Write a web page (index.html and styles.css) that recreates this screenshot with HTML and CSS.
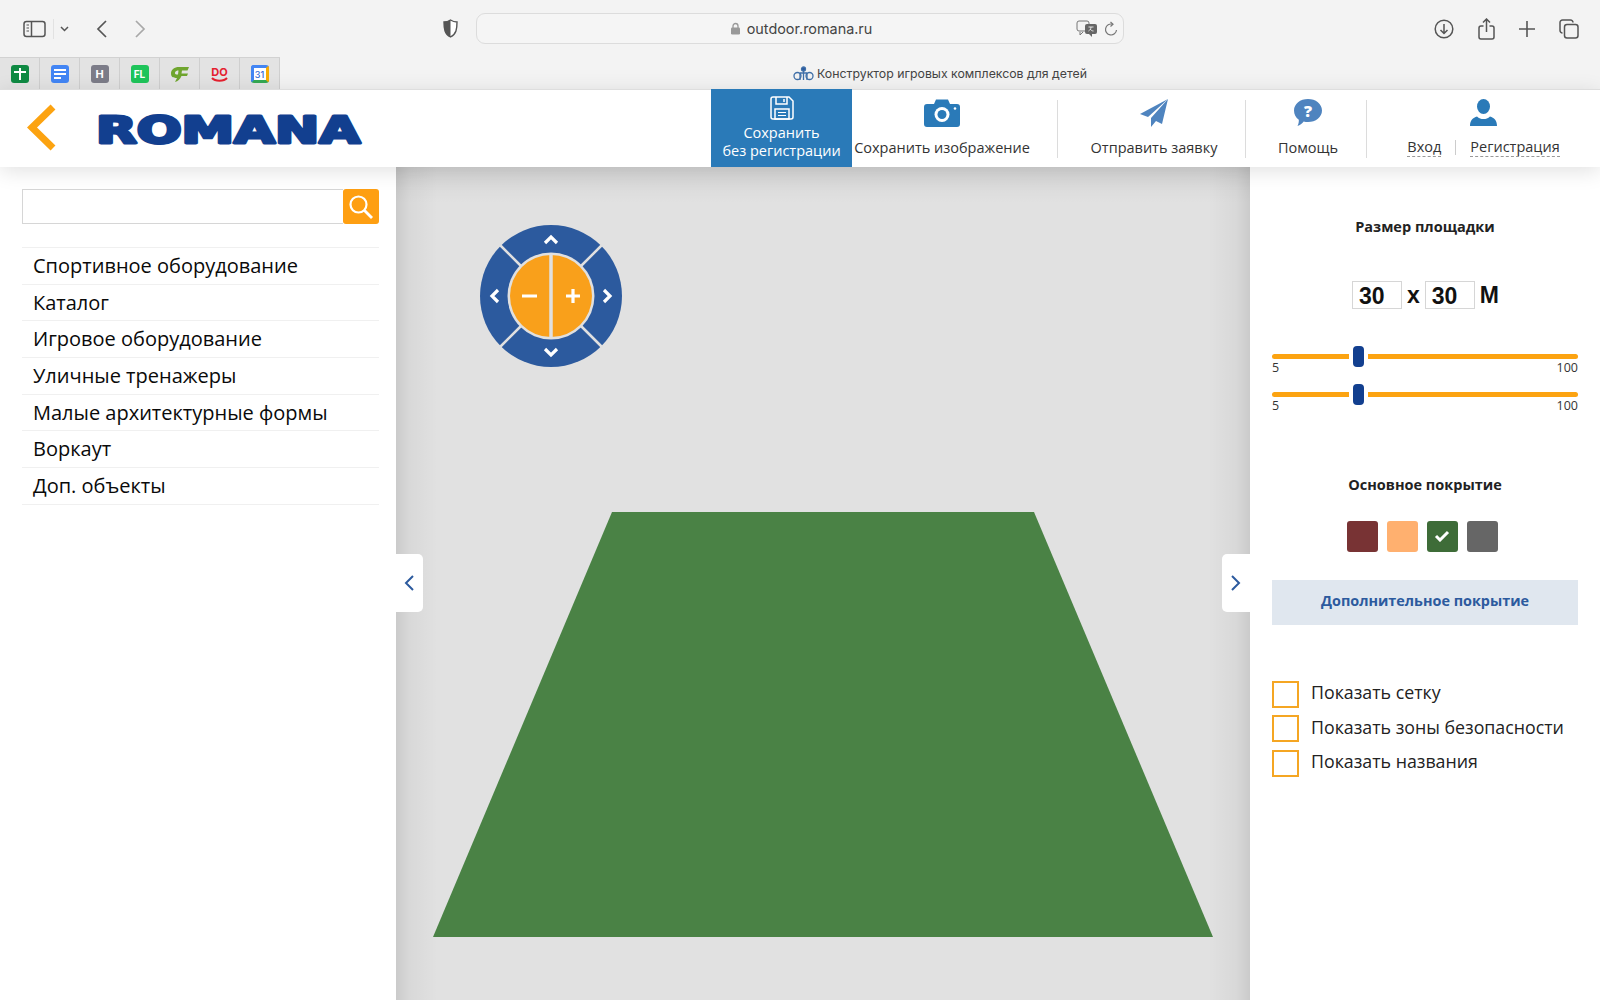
FILE: index.html
```html
<!DOCTYPE html>
<html lang="ru">
<head>
  <meta charset="UTF-8">
  <title>Конструктор игровых комплексов для детей</title>
  <link rel="stylesheet" href="styles.css">
</head>
<body>
  <!-- Browser chrome -->
  <div class="browser">
    <div class="toolbar">
      <svg class="ico ico-sidebar" width="23" height="18" viewBox="0 0 23 18" fill="none" stroke="#555" stroke-width="1.5"><rect x="1" y="1.5" width="21" height="15" rx="2.5"/><path d="M8.5 1.5v15"/><path d="M3.5 5h2.5M3.5 8h2.5M3.5 11h2.5" stroke-width="1.2"/></svg>
      <span class="toolbar-sep"></span>
      <svg class="ico ico-drop" width="9" height="6" viewBox="0 0 9 6" fill="none" stroke="#555" stroke-width="1.5"><path d="M1 1l3.5 3.5L8 1"/></svg>
      <svg class="ico ico-back" width="11" height="18" viewBox="0 0 11 18" fill="none" stroke="#555" stroke-width="1.7"><path d="M10 1L2 9l8 8"/></svg>
      <svg class="ico ico-fwd" width="11" height="18" viewBox="0 0 11 18" fill="none" stroke="#a8a8a8" stroke-width="1.7"><path d="M1 1l8 8-8 8"/></svg>
      <svg class="ico ico-shield" width="15" height="19" viewBox="0 0 15 19"><path d="M7.5 1C5.5 2.300 3 3 1 3c0 7 .6 12 6.500 15C13.400 15 14 10 14 3c-2 0-4.500-.7-6.500-2z" fill="#fff" stroke="#555" stroke-width="1.400"/><path d="M7.500 1C5.500 2.300 3 3 1 3c0 7 .6 12 6.500 15z" fill="#555"/></svg>
      <div class="urlbar">
        <div class="url-main">
          <svg width="11" height="13" viewBox="0 0 11 13"><path d="M3 6V4a2.500 2.500 0 015 0v2" fill="none" stroke="#999" stroke-width="1.300"/><rect x="1" y="5.500" width="9" height="7" rx="1.300" fill="#999"/></svg>
          <span>outdoor.romana.ru</span>
        </div>
        <svg class="url-translate" width="22" height="17" viewBox="0 0 22 17"><rect x="1" y="1" width="12" height="10" rx="2" fill="#f3f3f3" stroke="#777"/><path d="M4 12l0 3 3-3" fill="#f3f3f3" stroke="#777"/><rect x="9" y="4" width="12" height="10" rx="2" fill="#666"/><path d="M16 14v3l-3-3" fill="#666"/><path d="M12.500 7h5M15 7c0 2-1 3-2.500 4M14 9c.8 1 2 2 3.500 2" stroke="#fff" fill="none" stroke-width=".8"/></svg>
        <svg class="url-reload" width="14" height="16" viewBox="0 0 14 16" fill="none" stroke="#777" stroke-width="1.200"><path d="M8.500 3.200A5.500 5.500 0 1012.500 9"/><path d="M6.500 1l2.500 2.200-2.500 2.300"/></svg>
      </div>
      <div class="toolbar-right">
        <svg width="20" height="20" viewBox="0 0 20 20" fill="none" stroke="#555" stroke-width="1.500"><circle cx="10" cy="10" r="8.800"/><path d="M10 5v9.500M6.500 11l3.500 3.500 3.500-3.500"/></svg>
        <svg width="17" height="22" viewBox="0 0 17 22" fill="none" stroke="#555" stroke-width="1.500"><path d="M5.500 8H3a2 2 0 00-2 2v9a2 2 0 002 2h11a2 2 0 002-2v-9a2 2 0 00-2-2h-2.500"/><path d="M8.500 14V1.500M5 4.500l3.500-3.500L12 4.500"/></svg>
        <svg width="16" height="16" viewBox="0 0 16 16" fill="none" stroke="#555" stroke-width="1.600"><path d="M8 0v16M0 8h16"/></svg>
        <svg width="20" height="20" viewBox="0 0 20 20" fill="none" stroke="#555" stroke-width="1.500"><rect x="5.500" y="5.500" width="13.500" height="13.500" rx="2.500"/><path d="M3.500 14A2.500 2.500 0 011 11.500V3.500A2.500 2.500 0 013.500 1h8A2.500 2.500 0 0114 3.500"/></svg>
      </div>
    </div>
    <div class="tabbar">
      <div class="favs">
        <div class="fav"><span class="fav-ico fav-sheets"></span></div>
        <div class="fav"><span class="fav-ico fav-docs"><i></i><i></i><i></i></span></div>
        <div class="fav"><span class="fav-ico fav-h">H</span></div>
        <div class="fav"><span class="fav-ico fav-fl">FL</span></div>
        <div class="fav">
          <svg width="18" height="15" viewBox="0 0 18 15"><path d="M18 0H8C3.500 0 0 2.500 0 6.500S3 11 6 11l-2 4c3-1 5-2.500 6.500-6H16l1-2.500h-6.500L11 3.500h5.500zM7.500 3.500L7 7.500C5 7.800 3.500 7 4 5.500s2-2 3.500-2z" fill="#6fa52e" fill-rule="evenodd"/></svg>
        </div>
        <div class="fav"><span class="fav-do"><b>DO</b><svg width="17" height="5" viewBox="0 0 17 5" fill="none" stroke="#e5202e" stroke-width="2"><path d="M1 1c3 3.500 12 3.500 15 0"/></svg></span></div>
        <div class="fav"><span class="fav-ico fav-cal"><span>31</span></span></div>
      </div>
      <div class="page-title">
        <svg width="21" height="15" viewBox="0 0 21 15" fill="none" stroke="#3f6fa8" stroke-width="1.300"><circle cx="10.500" cy="3" r="2" fill="#2c5a9e"/><path d="M10.500 5v9M7 7h7M7 7v7M14 7v7"/><circle cx="4.500" cy="10" r="3.500"/><circle cx="16.500" cy="10" r="3.500"/></svg>
        <span>Конструктор игровых комплексов для детей</span>
      </div>
    </div>
  </div>

  <div class="app">
    <!-- Header -->
    <div class="header">
      <div class="brand">
        <svg class="brand-back" width="30" height="47" viewBox="0 0 30 47" fill="none" stroke="#fca311" stroke-width="7"><path d="M26 3L5 23.500 26 44"/></svg>
        <svg class="logo" width="276" height="44" viewBox="0 0 276 44">
          <text class="logo-text" x="5" y="35.500" textLength="264" lengthAdjust="spacingAndGlyphs">ROMANA</text>
        </svg>
      </div>
      <div class="nav">
        <a class="nav-item nav-save" href="#">
          <svg width="24" height="24" viewBox="0 0 24 24" fill="none" stroke="#fff" stroke-width="1.500"><path d="M3 1h16l4 4v16a2 2 0 01-2 2H3a2 2 0 01-2-2V3a2 2 0 012-2z"/><path d="M6 1v7h11V1M14 3v3"/><rect x="5" y="13" width="14" height="10"/><path d="M8 16.500h8M8 19.500h8" stroke-width="1.200"/></svg>
          <span>Сохранить<br>без регистрации</span>
        </a>
        <a class="nav-item nav-image" href="#">
          <svg width="36" height="28" viewBox="0 0 36 28"><path d="M3 5h7l2-4.500h12L26 5h7a3 3 0 013 3v17a3 3 0 01-3 3H3a3 3 0 01-3-3V8a3 3 0 013-3z" fill="#2a7ab8"/><circle cx="18" cy="15.500" r="7.500" fill="#fff"/><circle cx="18" cy="15.500" r="4.500" fill="#2a7ab8"/><circle cx="31" cy="9.500" r="1.300" fill="#fff"/></svg>
          <span>Сохранить изображение</span>
        </a>
        <a class="nav-item nav-send" href="#">
          <svg width="28" height="28" viewBox="0 0 28 28"><path d="M28 0L0 15l8 3z" fill="#4f84bf"/><path d="M28 0L11 19v9l5-6 6 3z" fill="#4f84bf"/></svg>
          <span>Отправить заявку</span>
        </a>
        <a class="nav-item nav-help" href="#">
          <svg width="28" height="27" viewBox="0 0 28 27"><path d="M14 0c7.700 0 14 4.800 14 11.500S21.700 23 14 23c-1.500 0-3-.2-4.300-.6C8 24.500 6 26 3.500 27c1-2 1.500-4 1.300-6.200C1.800 18.700 0 15.400 0 11.500 0 4.800 6.300 0 14 0z" fill="#4f84bf"/><text x="14" y="17.500" class="help-mark">?</text></svg>
          <span>Помощь</span>
        </a>
        <div class="nav-item nav-login">
          <svg width="27" height="27" viewBox="0 0 27 27"><ellipse cx="13.500" cy="7.500" rx="6.500" ry="7.500" fill="#2a7ab8"/><path d="M0 27c0-6 3-8 7-9.500 2 2 4 2.500 6.500 2.500s4.500-.5 6.500-2.500c4 1.500 7 3.500 7 9.500z" fill="#2a7ab8"/></svg>
          <div class="login-links">
            <a href="#">Вход</a>
            <i></i>
            <a href="#">Регистрация</a>
          </div>
        </div>
      </div>
    </div>

    <div class="main">
      <!-- Catalog -->
      <div class="sidebar">
        <div class="search">
          <input class="search-input" type="text">
          <button class="search-btn">
            <svg width="26" height="26" viewBox="0 0 26 26" fill="none" stroke="#fff" stroke-width="2.200"><circle cx="10.500" cy="10.500" r="8"/><path d="M16.500 16.500l7.500 7.500" stroke-width="2.800"/></svg>
          </button>
        </div>
        <ul class="menu">
          <li>Спортивное оборудование</li>
          <li>Каталог</li>
          <li>Игровое оборудование</li>
          <li>Уличные тренажеры</li>
          <li>Малые архитектурные формы</li>
          <li>Воркаут</li>
          <li>Доп. объекты</li>
        </ul>
      </div>

      <!-- Scene -->
      <div class="canvas">
        <svg class="ground" width="854" height="833" viewBox="0 0 854 833"><polygon points="216,345 638,345 817,770 37,770" fill="#4a8245"/></svg>
        <svg class="joystick" width="142" height="142" viewBox="-71 -71 142 142">
          <circle r="71" fill="#2c5a9e"/>
          <g stroke="#e0e0e0" stroke-width="2.500">
            <path d="M-30-30L-51-51M30-30L51-51M-30 30L-51 51M30 30L51 51"/>
          </g>
          <circle r="43.500" fill="#e0e0e0"/>
          <circle r="41" fill="#f9a01b"/>
          <path d="M0-43V43" stroke="#e0e0e0" stroke-width="3.500"/>
          <g fill="none" stroke="#fff" stroke-width="3.200">
            <path d="M-6-53l6-6 6 6M-6 53l6 6 6-6M-53-6l-6 6 6 6M53-6l6 6-6 6"/>
            <path d="M-29 0h15M15 0h14M22-7V7"/>
          </g>
        </svg>
        <button class="toggle toggle-left"><svg width="10" height="16" viewBox="0 0 10 16" fill="none" stroke="#2c5a9e" stroke-width="2"><path d="M9 1L2 8l7 7"/></svg></button>
        <button class="toggle toggle-right"><svg width="10" height="16" viewBox="0 0 10 16" fill="none" stroke="#2c5a9e" stroke-width="2"><path d="M1 1l7 7-7 7"/></svg></button>
      </div>

      <!-- Settings -->
      <div class="panel">
        <div class="panel-title">Размер площадки</div>
        <div class="size-row">
          <span class="size-input">30</span>
          <span class="size-x">x</span>
          <span class="size-input">30</span>
          <span class="size-unit">М</span>
        </div>
        <div class="slider">
          <div class="slider-track"><span class="slider-thumb"></span></div>
          <div class="slider-labels"><span>5</span><span>100</span></div>
        </div>
        <div class="slider">
          <div class="slider-track"><span class="slider-thumb"></span></div>
          <div class="slider-labels"><span>5</span><span>100</span></div>
        </div>
        <div class="panel-title panel-title-2">Основное покрытие</div>
        <div class="swatches">
          <span class="swatch swatch-brown"></span>
          <span class="swatch swatch-peach"></span>
          <span class="swatch swatch-green">
            <svg width="16" height="12" viewBox="0 0 16 12" fill="none" stroke="#fff" stroke-width="3"><path d="M2 6l4 4 8-8"/></svg>
          </span>
          <span class="swatch swatch-gray"></span>
        </div>
        <button class="extra-btn">Дополнительное покрытие</button>
        <div class="checks">
          <label class="check"><span class="check-box"></span><span class="check-text">Показать сетку</span></label>
          <label class="check"><span class="check-box"></span><span class="check-text">Показать зоны безопасности</span></label>
          <label class="check"><span class="check-box"></span><span class="check-text">Показать названия</span></label>
        </div>
      </div>
    </div>
  </div>
</body>
</html>
```

FILE: styles.css
```css
/* Base styles */
* {
  box-sizing: border-box;
}

body {
  margin: 0;
  height: 1000px;
  overflow: hidden;
  font-family: "Open Sans", "Noto Sans", sans-serif;
  background-color: #fff;
  color: #111;
}

a {
  color: inherit;
  text-decoration: none;
}

/* Browser chrome */
.browser {
  height: 89px;
  background-color: #f3f3f3;
  font-family: Inter, "Liberation Sans", sans-serif;
}

.toolbar {
  position: relative;
  display: flex;
  align-items: center;
  height: 57px;
  padding-left: 23px;
}

.ico {
  flex: none;
}

.toolbar-sep {
  width: 1px;
  height: 20px;
  margin-left: 7px;
  background-color: #e2e2e2;
}

.ico-drop {
  margin-left: 6px;
}

.ico-back {
  margin-left: 27px;
}

.ico-fwd {
  margin-left: 28px;
}

.ico-shield {
  margin-left: 297px;
}

.urlbar {
  display: flex;
  align-items: center;
  width: 648px;
  height: 31px;
  margin-left: 18px;
  padding: 0 5px 0 0;
  border: 1px solid #dcdcdc;
  border-radius: 9px;
  background-color: #f5f5f5;
}

.url-main {
  flex: 1;
  display: flex;
  align-items: center;
  justify-content: center;
  gap: 6px;
  padding-left: 49px;
  font-size: 14.4px;
  color: #444;
}

.url-translate {
  margin-right: 6px;
}

.toolbar-right {
  display: flex;
  align-items: center;
  margin-left: 310px;
  gap: 24px;
}

.tabbar {
  display: flex;
  height: 32px;
}

.favs {
  display: flex;
  width: 280px;
  background-color: #e3e3e3;
  border-top: 1px solid #d2d2d2;
}

.fav {
  width: 40px;
  padding-top: 1px;
  display: flex;
  align-items: center;
  justify-content: center;
  border-right: 1px solid #cfcfcf;
}

.fav-ico {
  width: 18px;
  height: 18px;
  border-radius: 3px;
  display: flex;
  align-items: center;
  justify-content: center;
  font-size: 11px;
  font-weight: 700;
  color: #fff;
}

.fav-sheets {
  background:
    linear-gradient(#fff, #fff) 3px 6px / 12px 2px no-repeat,
    linear-gradient(#fff, #fff) 8px 3px / 2px 12px no-repeat,
    #0f8a43;
}

.fav-docs {
  flex-direction: column;
  align-items: flex-start;
  gap: 2px;
  padding-left: 3px;
  background-color: #4285f4;
}

.fav-docs i {
  display: block;
  width: 12px;
  height: 2px;
  background-color: #fff;
}

.fav-docs i:last-child {
  width: 7px;
}

.fav-h {
  background-color: #7c7c88;
}

.fav-fl {
  background-color: #1ec45a;
  font-size: 10px;
}

.fav-do {
  display: flex;
  flex-direction: column;
  align-items: center;
  color: #e5202e;
  font-size: 11px;
  line-height: 10px;
}

.fav-cal {
  border: 3px solid #4285f4;
  border-right-color: #f9ab00;
  border-bottom-color: #34a853;
  background-color: #fff;
  font-size: 9px;
  font-weight: 500;
  color: #3367d6;
}

.page-title {
  flex: 1;
  display: flex;
  align-items: center;
  justify-content: center;
  gap: 3px;
  font-size: 12.3px;
  color: #444;
}

/* App */
.app {
  height: 911px;
  display: flex;
  flex-direction: column;
}

.header {
  position: relative;
  z-index: 2;
  display: flex;
  justify-content: space-between;
  height: 78px;
  background-color: #fff;
  border-top: 1px solid #dedede;
  box-shadow: 0 4px 20px rgba(0, 0, 0, 0.12);
}

.brand {
  display: flex;
  align-items: center;
  padding-left: 27px;
}

.brand-back {
  margin-top: -2px;
}

.logo {
  margin-left: 34px;
  overflow: visible;
}

.logo-text {
  font-family: "DejaVu Sans", sans-serif;
  font-size: 37px;
  font-weight: 700;
  fill: #123f8f;
  stroke: #123f8f;
  stroke-width: 3px;
  stroke-linejoin: round;
}

.nav {
  display: flex;
  height: 78px;
  margin-top: -1px;
  font-size: 14.5px;
  color: #333;
}

.nav-item {
  position: relative;
  display: flex;
  flex-direction: column;
  align-items: center;
  justify-content: space-between;
  padding: 10px 0 10px;
  white-space: nowrap;
}

.nav-save {
  width: 141px;
  padding: 7px 0 7px;
  background-color: #2a7ab8;
  color: #fff;
  line-height: 18px;
  text-align: center;
}

.nav-image {
  width: 206px;
  padding-right: 26px;
}

.nav-send {
  width: 188px;
  padding-left: 4px;
}

.nav-help {
  width: 121px;
  padding-left: 3px;
}

.nav-login {
  width: 233px;
}

.nav-image::after,
.nav-send::after,
.nav-help::after {
  content: "";
  position: absolute;
  top: 11px;
  right: 0;
  bottom: 9px;
  width: 1px;
  background-color: #dcdcdc;
}

.help-mark {
  font-family: "Open Sans", sans-serif;
  font-size: 16px;
  font-weight: 800;
  fill: #fff;
  text-anchor: middle;
}

.login-links {
  display: flex;
  align-items: center;
  gap: 14px;
}

.login-links a {
  border-bottom: 1px dashed #999;
  line-height: 19px;
}

.login-links i {
  width: 1px;
  height: 15px;
  background-color: #ccc;
}

.main {
  flex: 1;
  display: flex;
  min-height: 0;
}

/* Sidebar */
.sidebar {
  width: 396px;
  padding: 22px 17px 0 22px;
  background-color: #fff;
}

.search {
  display: flex;
  height: 35px;
}

.search-input {
  flex: 1;
  min-width: 0;
  border: 1px solid #d6d6d6;
  border-right: none;
  background-color: #fff;
}

.search-btn {
  width: 36px;
  padding: 0;
  border: none;
  border-radius: 3px;
  background-color: #fe9f12;
  display: flex;
  align-items: center;
  justify-content: center;
}

.menu {
  list-style: none;
  margin: 23px 0 0;
  padding: 0;
  border-top: 1px solid #f0f0f0;
}

.menu li {
  height: 36.7px;
  padding-left: 11px;
  border-bottom: 1px solid #f0f0f0;
  font-size: 20px;
  line-height: 35px;
  color: #0a0a0a;
}

/* Canvas */
.canvas {
  position: relative;
  flex: 1;
  background:
    linear-gradient(to bottom, rgba(0, 0, 0, 0.06), rgba(0, 0, 0, 0) 36px),
    linear-gradient(to right, rgba(0, 0, 0, 0.1), rgba(0, 0, 0, 0.04) 14px, rgba(0, 0, 0, 0) 42px),
    linear-gradient(to left, rgba(0, 0, 0, 0.1), rgba(0, 0, 0, 0.04) 14px, rgba(0, 0, 0, 0) 42px),
    #e1e1e1;
}

.ground {
  position: absolute;
  left: 0;
  top: 0;
}

.joystick {
  position: absolute;
  left: 84px;
  top: 58px;
}

.toggle {
  position: absolute;
  top: 387px;
  width: 27px;
  height: 58px;
  padding: 0;
  border: none;
  background-color: #fff;
  display: flex;
  align-items: center;
  justify-content: center;
}

.toggle-left {
  left: 0;
  padding-right: 2px;
  border-radius: 0 5px 5px 0;
}

.toggle-right {
  right: 0;
  width: 28px;
  border-radius: 5px 0 0 5px;
}

/* Panel */
.panel {
  width: 350px;
  padding: 50px 22px 0;
  background-color: #fff;
}

.panel-title {
  font-size: 14.5px;
  font-weight: 700;
  line-height: 20px;
  text-align: center;
  color: #222;
}

.panel-title-2 {
  margin-top: 62px;
}

.size-row {
  display: flex;
  align-items: center;
  justify-content: center;
  gap: 5px;
  margin: 44px 0 0;
  padding-left: 1px;
  font-family: "Liberation Sans", Arial, sans-serif;
  font-size: 23px;
  font-weight: 700;
  line-height: 28px;
  color: #111;
}

.size-input {
  width: 50px;
  height: 28px;
  padding-left: 6px;
  border: 1px solid #d6d6d6;
  line-height: 28px;
}

.size-row + .slider {
  margin-top: 45px;
}

.slider + .slider {
  margin-top: 16.7px;
}

.slider-track {
  position: relative;
  height: 5px;
  border-radius: 3px;
  background-color: #fca311;
}

.slider-thumb {
  position: absolute;
  left: 81px;
  top: -8px;
  width: 11px;
  height: 21px;
  background-color: #123f8f;
  border-radius: 4px;
  box-shadow: 0 0 0 4px #fff;
}

.slider-labels {
  display: flex;
  justify-content: space-between;
  margin-top: 1px;
  font-size: 12.5px;
  line-height: 15px;
  color: #333;
}

.swatches {
  display: flex;
  justify-content: center;
  gap: 9px;
  margin-top: 26px;
  padding-right: 6px;
}

.swatch {
  width: 31px;
  height: 31px;
  border-radius: 3px;
  display: flex;
  align-items: center;
  justify-content: center;
}

.swatch-brown {
  background-color: #783334;
}

.swatch-peach {
  background-color: #ffb06f;
}

.swatch-green {
  background-color: #3e6c38;
}

.swatch-gray {
  background-color: #666;
}

.extra-btn {
  display: block;
  width: 100%;
  height: 45px;
  margin-top: 28px;
  padding: 0 0 4px;
  border: none;
  background-color: #e0e7ef;
  font-family: inherit;
  font-size: 14.4px;
  font-weight: 700;
  color: #2c5a9e;
}

.checks {
  display: flex;
  flex-direction: column;
  gap: 7.5px;
  margin-top: 56px;
}

.check {
  display: flex;
  align-items: center;
  gap: 12px;
  height: 27px;
  font-size: 17.8px;
  color: #222;
}

.check-text {
  padding-bottom: 4px;
}

.check-box {
  width: 27px;
  height: 27px;
  border: 2.5px solid #f5a623;
}
```
